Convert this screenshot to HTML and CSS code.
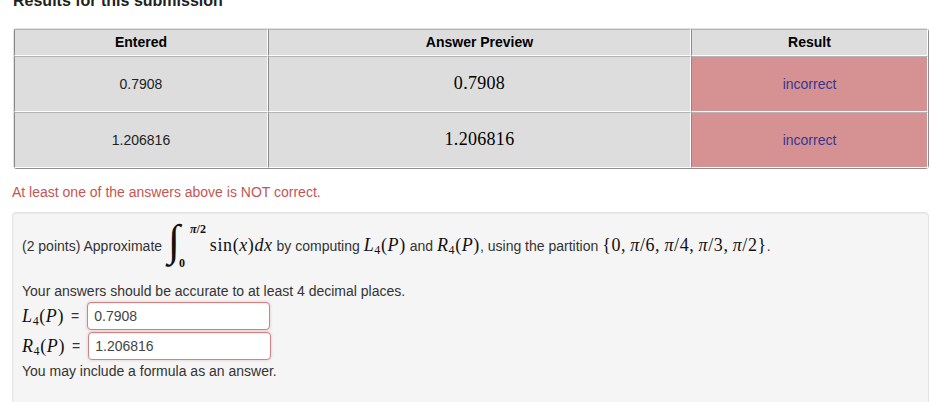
FILE: index.html
```html
<!DOCTYPE html>
<html>
<head>
	<title>Results for this submission</title>
	<meta http-equiv="content-type" content="text/html;charset=utf-8" />
	<link rel="stylesheet" href="styles.css">
</head>
<body>
<div id="container">

	<h3 class="results-title">Results for this submission</h3>

	<table class="attempt-results">
		<tr>
			<th class="col-entered">Entered</th>
			<th class="col-preview">Answer Preview</th>
			<th class="col-result">Result</th>
		</tr>
		<tr>
			<td>0.7908</td>
			<td class="preview"><span class="math">0.7908</span></td>
			<td class="incorrect">incorrect</td>
		</tr>
		<tr>
			<td>1.206816</td>
			<td class="preview"><span class="math">1.206816</span></td>
			<td class="incorrect">incorrect</td>
		</tr>
	</table>

	<p class="alert">At least one of the answers above is NOT correct.</p>

	<div class="problem">
		<p class="statement">(2 points) Approximate
			<span class="integral"><span class="integral-inner"><span class="int-sign">&int;</span><span class="limits"><span class="upper math"><i>&pi;</i>/2</span><span class="lower math">0</span></span></span></span>
			<span class="math">sin(<i>x</i>)<i>dx</i></span> by computing
			<span class="math"><i>L</i><sub>4</sub>(<i>P</i>)</span> and
			<span class="math"><i>R</i><sub>4</sub>(<i>P</i>)</span>, using the partition
			<span class="math">{0,&thinsp;<i>&pi;</i>/6,&thinsp;<i>&pi;</i>/4,&thinsp;<i>&pi;</i>/3,&thinsp;<i>&pi;</i>/2}</span>.</p>

		<p class="accuracy">Your answers should be accurate to at least 4 decimal places.</p>

		<div class="answer-row">
			<span class="math"><i>L</i><sub>4</sub>(<i>P</i>)</span><span class="eq">=</span>
			<input class="answer" type="text" value="0.7908">
		</div>
		<div class="answer-row">
			<span class="math"><i>R</i><sub>4</sub>(<i>P</i>)</span><span class="eq">=</span>
			<input class="answer" type="text" value="1.206816">
		</div>

		<p class="hint">You may include a formula as an answer.</p>
	</div>

</div>
</body>
</html>
```

FILE: styles.css
```css
		/* Reset */

		* { margin: 0; padding: 0; }


		/* Page */

		body {
			font-family: "Liberation Sans", Arial, sans-serif;
			font-size: 14px;
			line-height: 20px;
			color: #333333;
			background-color: white;
		}

		#container {
			padding-left: 12px;
			padding-right: 2px;
		}

		.math {
			font-family: "Liberation Serif", "DejaVu Serif", serif;
			font-size: 18px;
			letter-spacing: 0.6px;
			color: #111111;
		}

		.math i {
			font-style: italic;
		}

		.math sub {
			font-size: 12px;
			line-height: 0;
			vertical-align: -3px;
		}


		/* Header */

		.results-title {
			font-size: 16px;
			font-weight: bold;
			line-height: 20px;
			color: #222222;
			margin: -9px 0 17px 1px;
		}


		/* Results table */

		.attempt-results {
			width: 916px;
			margin-left: 1px;
			table-layout: fixed;
			border-collapse: separate;
			border-spacing: 0;
			border: solid 1px;
			border-color: #e0e0e0 #8e8e8e #8e8e8e #e0e0e0;
			border-radius: 4px;
		}

		.attempt-results th, .attempt-results td {
			box-sizing: border-box;
			background-color: #dddddd;
			border: solid 1px;
			border-color: #b4b4b4 #ffffff #ffffff #8a8a8a;
			text-align: center;
			color: #222222;
		}

		.attempt-results th {
			font-weight: bold;
			color: #000000;
			padding: 3px 8px;
			line-height: 19px;
		}

		.attempt-results td {
			padding: 16px 8px;
			line-height: 21px;
		}

		.col-entered { width: 254px; }
		.col-preview { width: 423px; }
		.col-result { width: 237px; }

		.attempt-results td.incorrect {
			background-color: #d69292;
			color: #363690;
		}

		.attempt-results .preview .math {
			color: #000000;
			letter-spacing: 0.3px;
		}


		/* Messages */

		.alert {
			color: #c65552;
			margin: 13px 0 10px;
		}


		/* Problem */

		.problem {
			background-color: #f5f5f5;
			border: solid 1px #e3e3e3;
			border-radius: 4px;
			box-shadow: inset 0 1px 1px rgba(0, 0, 0, 0.05);
			padding: 9px 9px 40px;
		}

		.statement {
			margin-top: -7px;
		}

		/* integral block: overflow keeps its baseline at the bottom edge */
		.integral {
			display: inline-block;
			overflow: hidden;
			height: 60px;
			vertical-align: -24px;
			margin-left: -3px;
			padding-left: 5px;
			padding-right: 2px;
			margin-right: -2px;
		}

		.integral-inner {
			display: flex;
			height: 60px;
		}

		.int-sign {
			font-family: "Liberation Serif", "DejaVu Serif", serif;
			font-style: italic;
			font-size: 44px;
			line-height: 43px;
			padding-top: 4px;
			color: #111111;
		}

		.limits {
			display: flex;
			flex-direction: column;
			justify-content: space-between;
			padding: 8px 0 5px 0;
			font-weight: bold;
		}

		.limits .math {
			font-size: 12px;
			line-height: 13px;
			letter-spacing: 0;
		}

		.limits .upper {
			margin-left: 10px;
		}

		.limits .lower {
			margin-left: -1px;
		}

		.accuracy {
			margin-top: 6px;
		}

		.answer-row {
			display: flex;
			align-items: center;
			height: 30px;
		}

		.answer-row .eq {
			margin: 0 8px 0 7px;
		}

		.answer {
			box-sizing: border-box;
			width: 183px;
			height: 28px;
			padding: 0 6px;
			font-family: "Liberation Sans", Arial, sans-serif;
			font-size: 14px;
			color: #444444;
			background-color: white;
			border: solid 1px #cc8485;
			border-radius: 4px;
			box-shadow: inset 0 1px 1px rgba(0, 0, 0, 0.075), 0 0 3px rgba(185, 74, 72, 0.3);
		}
```
